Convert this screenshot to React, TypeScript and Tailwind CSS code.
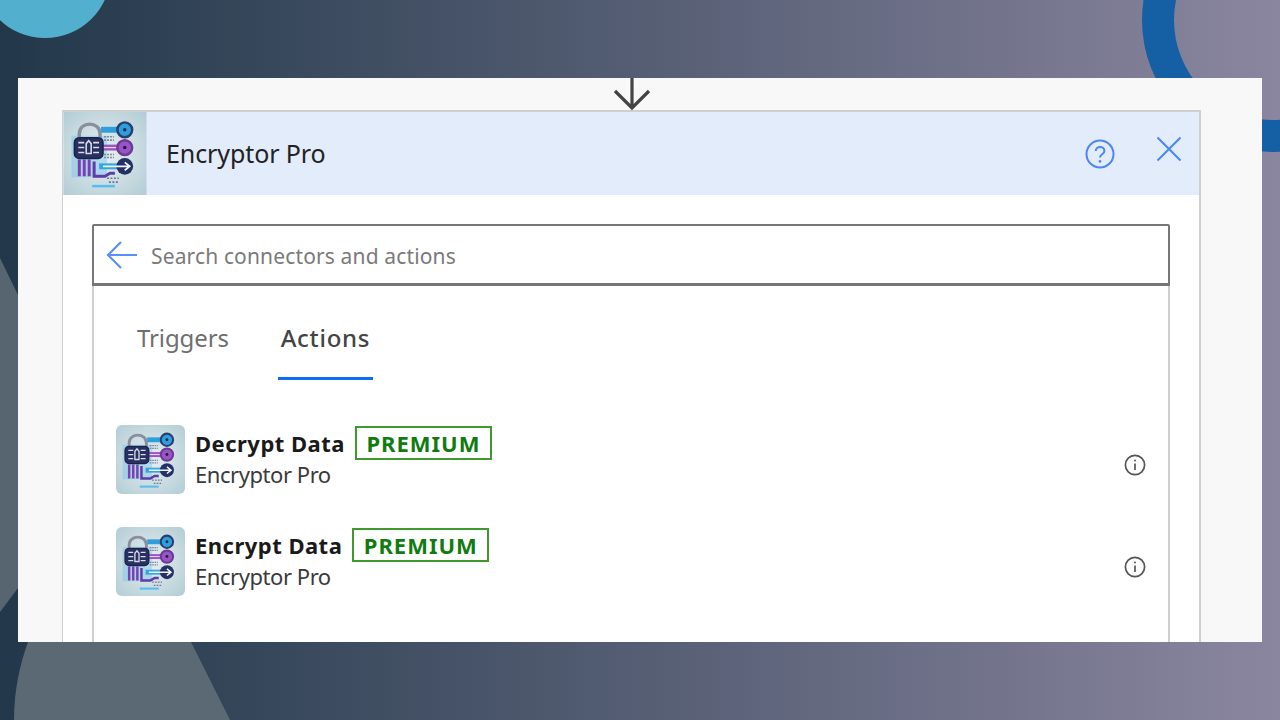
import { FC } from "react"

const uiFont = "font-['Noto_Sans','Open_Sans',sans-serif]"

const EncryptorLogo: FC<{ className?: string; id: string }> = ({ className, id }) => (
  <svg viewBox="0 0 84 84" className={className}>
    <defs>
      <radialGradient id={id} cx="50%" cy="50%" r="70%">
        <stop offset="0%" stopColor="#e8f0f1" />
        <stop offset="100%" stopColor="#b2ccd5" />
      </radialGradient>
    </defs>
    <rect width="84" height="84" fill={`url(#${id})`} />
    <g className="blur-[0.7px]">
      {/* blue glow behind the lock */}
      <path d="M8 24 H44 V66 H8 Z" fill="#6cc0ee" opacity="0.4" />
      <path d="M16 28 V22 C16 9 37 9 37 22 V28" fill="none" stroke="#8a8e9e" strokeWidth="3.5" />
      {/* top key */}
      <path d="M38 18 H57" stroke="#2f9fdc" strokeWidth="6" />
      <circle cx="62" cy="18" r="7.5" fill="#2f9fdc" stroke="#283f70" strokeWidth="2.5" />
      <circle cx="62" cy="18" r="1.8" fill="#16305a" />
      <path d="M41 25 H51 M41 28.5 H51" stroke="#7f86a0" strokeWidth="1.6" strokeDasharray="2 1" />
      {/* middle key */}
      <path d="M38 36 H57" stroke="#9a55c4" strokeWidth="6" />
      <path d="M40 36 H55" stroke="#eadcf4" strokeWidth="1.2" />
      <circle cx="62" cy="36" r="7.5" fill="#9a55c4" stroke="#6c3a96" strokeWidth="2.5" />
      <circle cx="62" cy="36" r="1.8" fill="#2a1848" />
      <path d="M41 43 H51 M41 46 H51" stroke="#7f86a0" strokeWidth="1.6" strokeDasharray="2 1" />
      {/* bottom arrow */}
      <path d="M36 55 H56" stroke="#35a5e0" strokeWidth="6" />
      <circle cx="62" cy="55" r="8.5" fill="#262f66" />
      <path d="M40 55 H67 M62 51 L67 55 L62 59" fill="none" stroke="#f1f5fb" strokeWidth="1.8" />
      {/* lower circuit */}
      <path d="M16 48 V65 M21 48 V65 M26 48 V65" stroke="#7a3fb0" strokeWidth="3" />
      <path d="M31 50 V65 H42 L47 62 H52" fill="none" stroke="#5f3da8" strokeWidth="3" />
      <path d="M44 67 H56 M46 71 H56" stroke="#70768c" strokeWidth="1.6" strokeDasharray="2 1.5" />
      <path d="M29 75 H52" stroke="#55bdf0" strokeWidth="2.5" />
      {/* lock body */}
      <rect x="11" y="26" width="29" height="21" rx="5" fill="#28305f" stroke="#1b2148" strokeWidth="1.5" />
      <path d="M15 31 H21 M15 36 H21 M15 41 H21 M30 31 H36 M30 36 H36 M30 41 H36" stroke="#d7dcec" strokeWidth="1.6" />
      <path d="M23 42 V32 L25.5 29 L28 32 V42 Z" fill="none" stroke="#d7dcec" strokeWidth="1.6" />
    </g>
  </svg>
)

const InfoIcon = () => (
  <svg viewBox="0 0 22 22" className="w-[22px] h-[22px]" fill="none" stroke="#555">
    <circle cx="11" cy="11" r="9.6" strokeWidth="1.7" />
    <path d="M11 9.5 V16" strokeWidth="1.7" />
    <circle cx="11" cy="6.6" r="1" fill="#555" stroke="none" />
  </svg>
)

const ActionRow: FC<{ title: string; logoId: string }> = ({ title, logoId }) => (
  <div className="flex items-center h-[69px] pl-[22px] pr-[22px]">
    <EncryptorLogo id={logoId} className="w-[69px] h-[69px] rounded-md" />
    <div className="ml-[10px] self-start pt-px flex flex-col">
      <div className="flex items-center h-[34px]">
        <span className="text-[22px] leading-[34px] font-bold tracking-[0.48px] text-[#1a1a1a]">{title}</span>
        <span className="ml-[10px] h-[34px] w-[137px] flex items-center justify-center border-2 border-[#3f9a2e] text-[22px] font-bold tracking-[1px] text-[#107c10]">
          PREMIUM
        </span>
      </div>
      <span className="text-[22px] leading-[28px] tracking-[-0.45px] text-[#3a3a3a]">Encryptor Pro</span>
    </div>
    <div className="ml-auto mt-[10px]"><InfoIcon /></div>
  </div>
)

export default function App() {
  return (
    <div className={`relative w-full h-[720px] overflow-hidden bg-gradient-to-r from-[#22384a] to-[#8b86a0] ${uiFont}`}>
      {/* background shapes */}
      <div className="absolute left-[-21px] top-[-94px] w-[132px] h-[132px] rounded-full bg-[#52afce]" />
      <div className="absolute left-[1142px] top-[-112px] w-[264px] h-[264px] rounded-full border-[32px] border-[#1560a5]" />
      <svg className="absolute left-0 top-0 w-[1280px] h-[720px]" viewBox="0 0 1280 720">
        <path d="M0 258 L18 295 V588 L0 612 Z" fill="#566570" />
        <path d="M14 720 C14 690 20 664 28 642 H191 L230 720 Z" fill="#5b6975" />
      </svg>

      <div className="relative ml-[18px] mr-[18px] mt-[78px] h-[564px] bg-[#f8f8f8] overflow-hidden flex flex-col">
        {/* connector arrow */}
        <svg viewBox="0 0 38 33" className="absolute left-[595px] top-0 w-[38px] h-[33px]" fill="none" stroke="#444" strokeWidth="3.2">
          <path d="M19 0 V30 M2 13 L19 30 L36 13" />
        </svg>

        <div className="ml-[44px] mt-[32px] w-[1139px] h-[532px] flex flex-col border-l border-r-2 border-t-2 border-[#cfcfcf] bg-white">
          <div className="flex items-center h-[83px] bg-[#e2ecfb] shrink-0">
            <EncryptorLogo id="logo-header" className="w-[84px] h-[83px] shrink-0" />
            <span className="ml-[19px] text-[25px] tracking-[-0.1px] text-[#222]">Encryptor Pro</span>
            <svg viewBox="0 0 30 30" className="ml-auto w-[30px] h-[30px]" fill="none" stroke="#4a86f7" strokeWidth="2">
              <circle cx="15" cy="15" r="13.5" />
              <path d="M10.8 12 C10.8 6.8 19.4 6.8 19.4 12 C19.4 15.4 15 15.2 15 18.6" />
              <circle cx="15" cy="22.4" r="1.3" fill="#4a86f7" stroke="none" />
            </svg>
            <svg viewBox="0 0 26 26" className="ml-[41px] mr-[17px] mb-[10px] w-[26px] h-[26px]" fill="none" stroke="#4a86f7" strokeWidth="2">
              <path d="M1.5 1.5 L24.5 24.5 M24.5 1.5 L1.5 24.5" />
            </svg>
          </div>

          <div className="flex-1 flex flex-col px-[29px] pt-[29px]">
            <div className="flex items-center h-[62px] shrink-0 border-2 border-b-[3px] border-[#777] rounded-t-[2px] pl-[12px]">
              <svg viewBox="0 0 32 30" className="w-[32px] h-[30px]" fill="none" stroke="#5b90f5" strokeWidth="2.2">
                <path d="M31 15 H2 M15 2 L2 15 L15 28" />
              </svg>
              <span className="ml-[13px] pt-[5px] text-[21px] tracking-[0.14px] text-[#7a7a7a]">Search connectors and actions</span>
            </div>

            <div className="flex-1 border-x-2 border-[#cfcfcf] flex flex-col">
              <div className="flex h-[94px] shrink-0 pl-[43px]">
                <span className="pt-[32px] text-[24px] leading-[40px] tracking-[-0.1px] text-[#6f6f6f]">Triggers</span>
                <span className="ml-[49px] w-[95px] text-center pt-[32px] text-[24px] leading-[40px] tracking-[0.7px] font-medium text-[#444] border-b-[3px] border-[#0f6cf0]">
                  Actions
                </span>
              </div>
              <div className="mt-[45px] flex flex-col gap-[33px]">
                <ActionRow title="Decrypt Data" logoId="logo-decrypt" />
                <ActionRow title="Encrypt Data" logoId="logo-encrypt" />
              </div>
            </div>
          </div>
        </div>
      </div>
    </div>
  )
}
